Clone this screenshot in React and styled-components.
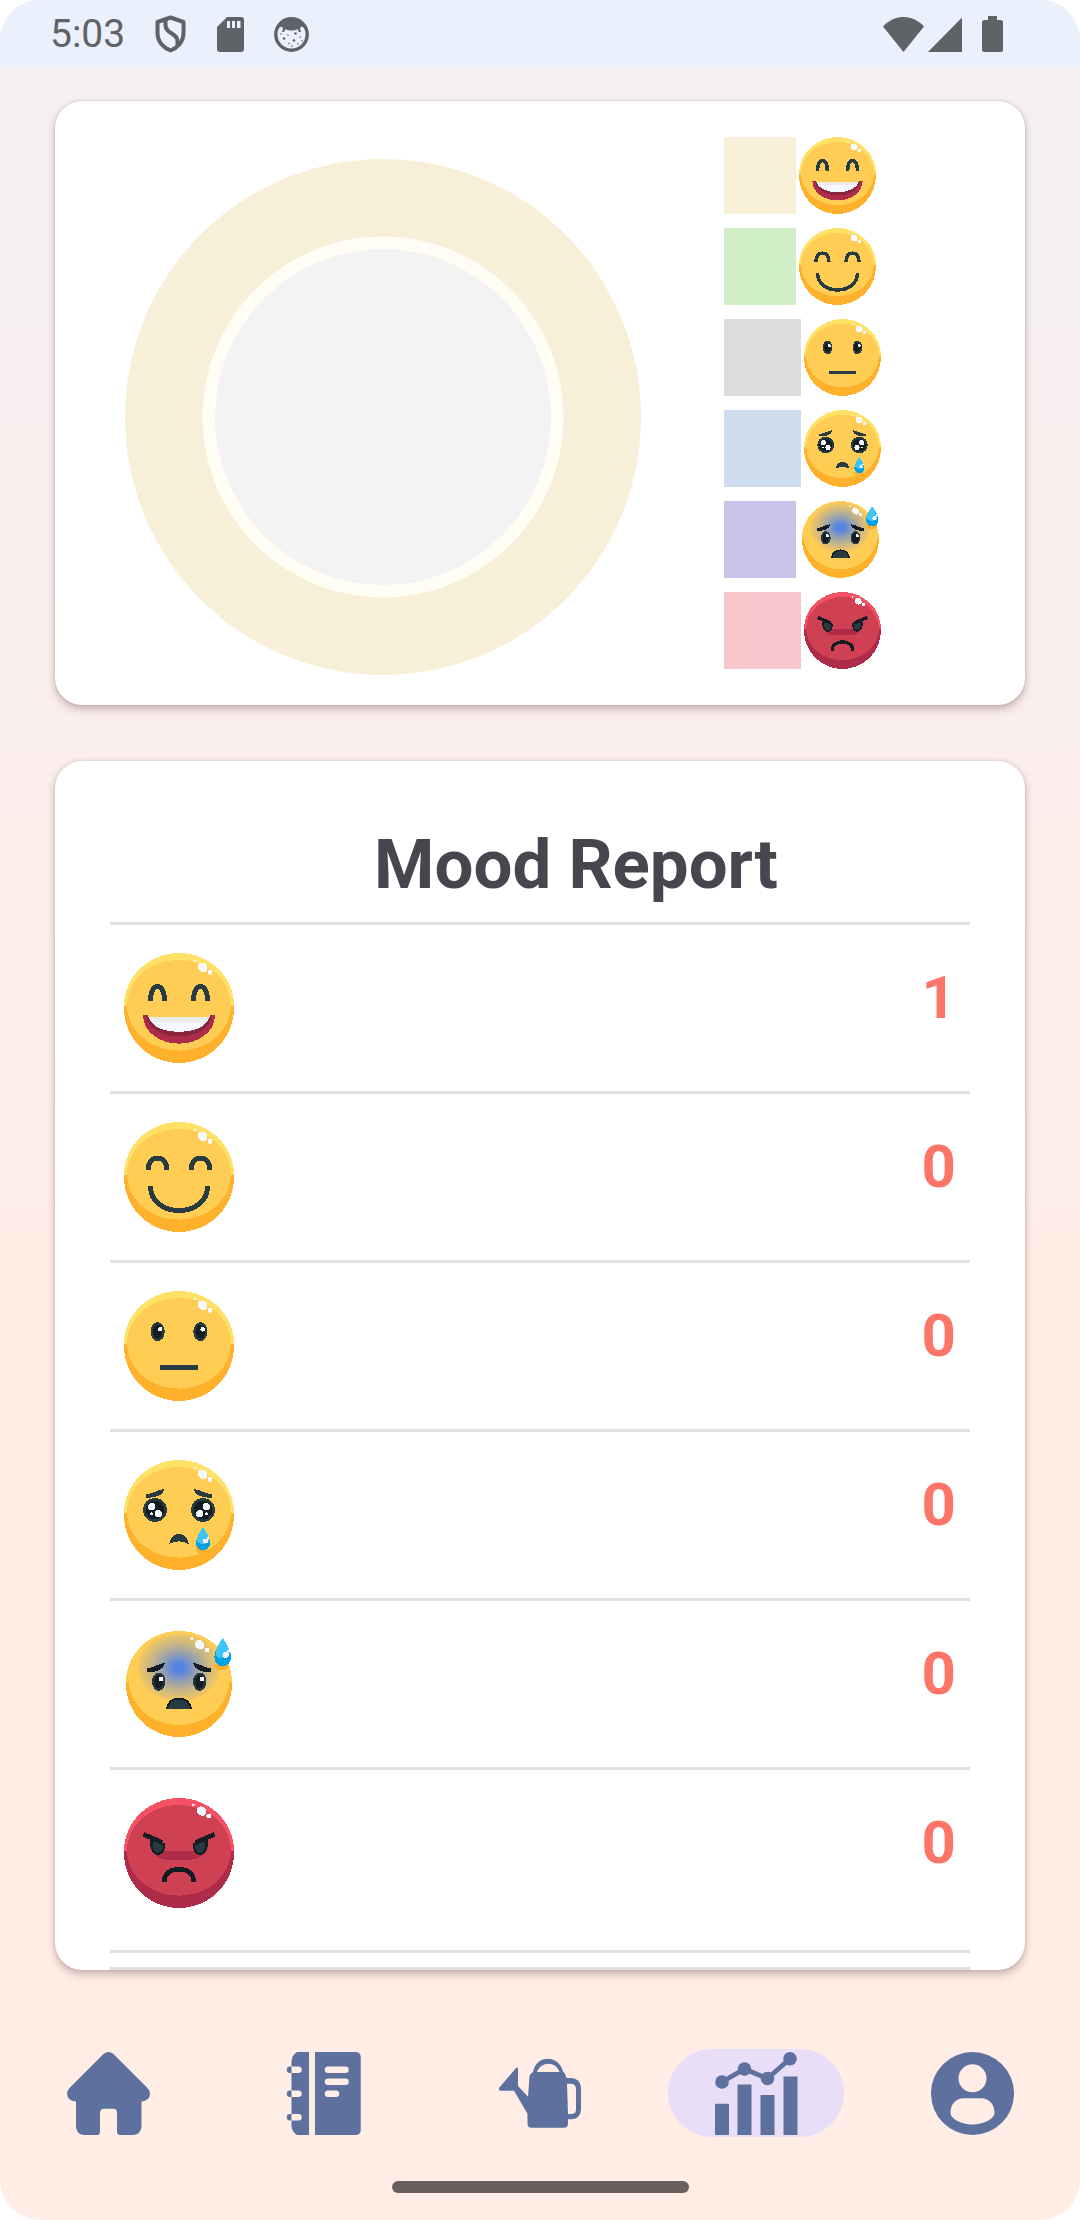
import React, { useId } from "react";
import styled, { createGlobalStyle } from "styled-components";

const GlobalStyle = createGlobalStyle`
  *, *::before, *::after { box-sizing: border-box; }
  body {
    margin: 0;
    background: #ffffff;
    font-family: Roboto, "Liberation Sans", sans-serif;
  }
  svg { display: block; flex: none; }
`;

const INK = "#273941";
const BLACK = "#131c20";
const SLATE = "#5d709e";

const Screen = styled.div`
  min-height: 100vh;
  display: flex;
  flex-direction: column;
  border-radius: 40px;
  overflow: hidden;
  background: linear-gradient(#f5f0f4 66px, #ffede6 1250px);
`;

const StatusBar = styled.header`
  display: flex;
  align-items: center;
  justify-content: space-between;
  height: 66px;
  padding: 2px 77px 0 50px;
  background: #eaf1fd;
  color: #5f6267;
`;

const StatusGroup = styled.div`
  display: flex;
  align-items: center;
  gap: ${(p) => p.$gap}px;
`;

const Clock = styled.time`
  font-size: 39px;
  line-height: 48px;
`;

const Content = styled.main`
  flex: 1;
  display: flex;
  flex-direction: column;
  gap: 56px;
  padding: 35px 55px 0;
`;

const Card = styled.section`
  background: #ffffff;
  border-radius: 27px;
  box-shadow: 0 4px 9px rgba(70, 40, 30, 0.3), 0 0 3px rgba(70, 40, 30, 0.16);
  overflow: hidden;
`;

const ChartCard = styled(Card)`
  display: flex;
  align-items: center;
  gap: 83px;
  padding: 30px 70px;
`;

const DonutFrame = styled.div`
  flex: 0 1 516px;
  padding-top: 28px;

  svg { width: 100%; height: auto; }
`;

const Legend = styled.ul`
  display: flex;
  flex-direction: column;
  gap: 14px;
  margin: 0;
  padding: 0;
  list-style: none;
`;

const LegendItem = styled.li`
  display: flex;
  gap: 3px;
`;

const Swatch = styled.span`
  width: ${(p) => (p.$narrow ? 72 : 77)}px;
  height: 77px;
  background: ${(p) => p.$color};
`;

const ReportCard = styled(Card)`
  padding: 0 55px;
`;

const ReportTable = styled.table`
  width: 100%;
  border-spacing: 0;
`;

const Title = styled.th`
  padding: 63px 0 16px 72px;
  border-bottom: 3px solid #e0e0e0;
  color: #49454f;
  font-size: 69px;
  line-height: 82px;
  font-weight: 700;
  text-align: center;
`;

const MoodCell = styled.th`
  padding: 28px 14px;
  border-bottom: 3px solid #e0e0e0;
  text-align: left;

  tr:last-child > & { padding-bottom: 42px; }
`;

const CountCell = styled.td`
  padding: 28px 14px;
  border-bottom: 3px solid #e0e0e0;
  vertical-align: top;
  text-align: right;
  color: #fd7469;
  font-size: 60px;
  line-height: 90px;
  font-weight: 700;
`;

const EndCell = styled.td`
  height: 17px;
  padding: 0;
  border-bottom: 3px solid #e0e0e0;
`;

const NavBar = styled.nav`
  display: grid;
  grid-template-columns: repeat(5, 1fr);
  justify-items: center;
  padding: 79px 0 44px;
`;

const NavButton = styled.button`
  display: flex;
  align-items: center;
  justify-content: center;
  width: 176px;
  height: 88px;
  padding: 0;
  border: 0;
  border-radius: 44px;
  background: ${(p) => (p.$active ? "#e8def8" : "transparent")};
  color: ${SLATE};
  cursor: pointer;
`;

const HomeHandle = styled.div`
  width: 297px;
  height: 12px;
  margin: 0 auto 27px;
  border-radius: 6px;
  background: #67605d;
`;

/* ---------- Faces ---------- */

const YELLOW = { top: "#ffe168", base: "#ffb12c", skin: "#ffcd54" };
const RED = { top: "#f65164", base: "#ae2b4a", skin: "#d04053" };

function Head({ tone }) {
  return (
    <>
      <circle cx="55" cy="55" r="55" fill={tone.base} />
      <path d="M0 53A55 53 0 0 1 110 53Z" fill={tone.top} />
      <ellipse cx="55" cy="52.3" rx="52" ry="45.3" fill={tone.skin} />
    </>
  );
}

function Shine({ x = 0, y = 0 }) {
  return (
    <g transform={`translate(${x} ${y})`} fill="#f5f9fd">
      <ellipse cx="78.7" cy="14.3" rx="5.2" ry="4.3" transform="rotate(40 78.7 14.3)" />
      <circle cx="86" cy="19.3" r="2.4" />
      <circle cx="70.7" cy="8" r="1.3" />
    </g>
  );
}

function Drop({ x, y, scale = 1 }) {
  return (
    <g transform={`translate(${x} ${y}) scale(${scale})`}>
      <path d="M0 0C3 5 7 10 7 16A7 7.5 0 0 1-7 16C-7 10-3 5 0 0Z" fill="#00a1e2" />
      <path d="M0 0C3 5 6.6 9 6 14C5 18-5 18-6 14C-6.6 9-3 5 0 0Z" fill="#3dc4f8" />
      <circle cx="2.6" cy="14" r="2.5" fill="#f5f9fd" />
      <circle cx="5" cy="10.8" r="1.2" fill="#f5f9fd" />
    </g>
  );
}

const Mirrored = ({ children }) => (
  <>
    {children}
    <g transform="translate(110 0) scale(-1 1)">{children}</g>
  </>
);

function Grin() {
  return (
    <>
      <Head tone={YELLOW} />
      <Shine />
      <Mirrored>
        <path d="M26.5 48C26.5 38 30 33.5 33.5 33.5S40.5 38 40.5 48" fill="none" stroke={INK} strokeWidth="5" />
      </Mirrored>
      <path d="M19 62.3H91C91 79 74 90.7 55 90.7S19 79 19 62.3Z" fill="#ae2b4a" />
      <path d="M22 62.3H88C86 76 72 83.3 55 83.3S24 76 22 62.3Z" fill="#8a263c" />
      <path d="M24 62.3H86C83 74 71 78.7 55 78.7S27 74 24 62.3Z" fill="#f5f9fd" />
      <path d="M24 62.3H86L83 68.5H27Z" fill="#ececec" />
      <path d="M25 62H85V64H25Z" fill="#ffcd54" />
    </>
  );
}

function Smile() {
  return (
    <>
      <Head tone={YELLOW} />
      <Shine />
      <g fill="none" stroke={INK} strokeWidth="5">
        <Mirrored>
          <path d="M24.3 48C24.3 40 28 36 33.5 36S42.7 40 42.7 48" />
        </Mirrored>
        <path d="M26.5 64C26.5 80 40 88.5 55 88.5S83.5 80 83.5 64" />
      </g>
    </>
  );
}

function Neutral() {
  return (
    <>
      <Head tone={YELLOW} />
      <Shine />
      {[33.7, 76.3].map((x) => (
        <g key={x}>
          <ellipse cx={x} cy="40.7" rx="7" ry="9.5" fill={INK} />
          <ellipse cx={x} cy="40.7" rx="4.6" ry="7" fill={BLACK} />
          <circle cx={x + 2.4} cy="38.3" r="2.3" fill="#f5f9fd" />
        </g>
      ))}
      <rect x="36" y="74" width="38" height="5" fill={INK} />
    </>
  );
}

function Crying() {
  return (
    <>
      <Head tone={YELLOW} />
      <Shine />
      <Mirrored>
        <path d="M22 34C31 34 33 29 40.7 29C39 36 31 38 22 37.7Z" fill={INK} />
        <circle cx="31" cy="50" r="12" fill={INK} />
        <circle cx="31" cy="50" r="9.2" fill={BLACK} />
        <circle cx="27.7" cy="46.7" r="3.7" fill="#f5f9fd" />
        <circle cx="34.3" cy="53.7" r="3.7" fill="#f5f9fd" />
        <circle cx="27.5" cy="53.7" r="1.3" fill="#f5f9fd" />
      </Mirrored>
      <path d="M45.3 84C46.5 77 50 74 55 74S63.5 77 64.7 84C59 80.5 51 80.5 45.3 84Z" fill={INK} />
      <circle cx="77" cy="89" r="5" fill="#ffb12c" />
      <Drop x={79} y={67} />
    </>
  );
}

function Worried() {
  const glow = useId();
  return (
    <>
      <radialGradient id={glow}>
        <stop offset="0" stopColor="#5082e6" />
        <stop offset="0.15" stopColor="#5082e6" stopOpacity="0.95" />
        <stop offset="1" stopColor="#8f9fc0" stopOpacity="0.12" />
      </radialGradient>
      <circle cx="55" cy="55" r="53" fill="#ffb12c" />
      <path d="M2 53A53 51 0 0 1 108 53Z" fill="#ffcd54" />
      <ellipse cx="55" cy="50" rx="50.5" ry="46" fill="#ffcd54" />
      <ellipse cx="55" cy="38.5" rx="41" ry="34" fill={`url(#${glow})`} />
      <Shine x={-3} y={1.5} />
      <Mirrored>
        <path d="M23 39C32 39 33 34 41 34C40 41 31 43.5 23 43Z" fill={BLACK} />
      </Mirrored>
      {[34.7, 75.7].map((x) => (
        <g key={x}>
          <ellipse cx={x} cy="52.7" rx="6.8" ry="9.2" fill={INK} />
          <ellipse cx={x} cy="52.7" rx="4.5" ry="7" fill={BLACK} />
          <circle cx={x + 2.2} cy="50" r="2.3" fill="#f5f9fd" />
        </g>
      ))}
      <path d="M42 80C43 72 48 68.7 55 68.7S67 72 68 80Z" fill={BLACK} />
      <path d="M44 80C45 73.5 49 70.5 55 70.5S65 73.5 66 80Z" fill={INK} />
      <ellipse cx="97.3" cy="37" rx="7.5" ry="4" fill="#ffb12c" />
      <Drop x={98.7} y={9} scale={1.2} />
    </>
  );
}

function Angry() {
  return (
    <>
      <Head tone={RED} />
      <Shine x={-1.3} y={-1.2} />
      <path d="M31 52.7H79V56C77 60 72 61.7 66 61.7H44C38 61.7 33 60 31 56Z" fill="#ae2b4a" />
      <Mirrored>
        <path d="M26 42L40.7 45C42 53 38.5 57 33.7 57S24.5 50 26.5 42Z" fill={BLACK} />
        <path d="M28.5 43.5L39 46C39.5 51.5 37 55 33.7 55S28 50 28.5 43.5Z" fill={INK} />
        <path d="M19.5 36.3L38.5 44.5" fill="none" stroke={BLACK} strokeWidth="4.6" />
      </Mirrored>
      <path d="M40.3 84C40.3 75 47 71.3 55 71.3S69.7 75 69.7 84" fill="none" stroke={BLACK} strokeWidth="4.8" />
    </>
  );
}

const moods = [
  { name: "Very happy", Face: Grin, color: "#f8efd8", count: 1, narrow: true },
  { name: "Happy", Face: Smile, color: "#d0efc6", count: 0, narrow: true },
  { name: "Neutral", Face: Neutral, color: "#dcdcdc", count: 0 },
  { name: "Sad", Face: Crying, color: "#cfdced", count: 0 },
  { name: "Worried", Face: Worried, color: "#c9c3e9", count: 0, narrow: true, box: "-2 2 110 106" },
  { name: "Angry", Face: Angry, color: "#f5c7ca", count: 0 },
];

function MoodFace({ mood, size, width = size, viewBox = "0 0 110 110" }) {
  const { Face, name } = mood;
  return (
    <svg width={width} height={size} viewBox={viewBox} role="img" aria-label={name} shapeRendering="crispEdges">
      <Face />
    </svg>
  );
}

/* ---------- Status icons ---------- */

const ShieldIcon = () => (
  <svg width="32" height="38" viewBox="0 0 32 38" fill="none" stroke="currentColor" strokeWidth="4" strokeLinejoin="round">
    <path d="M15.5 2.5L28.5 7V18C28.5 27 22 33 15.5 35.5C9 33 2.5 27 2.5 18V7Z" />
    <path d="M10.5 5V10C10.5 19 22.5 18 22.5 26V30" />
  </svg>
);

const SdCardIcon = () => (
  <svg width="27" height="35" viewBox="0 0 27 35">
    <path fill="currentColor" fillRule="evenodd" d="M10 0H24Q27 0 27 3V32Q27 35 24 35H3Q0 35 0 32V10ZM10 4V11H13V4ZM15 4V11H18V4ZM20 4V11H23.5V4Z" />
  </svg>
);

const FaceBadgeIcon = () => (
  <svg width="35" height="35" viewBox="0 0 35 35">
    <circle cx="17.5" cy="17.5" r="15.7" fill="none" stroke="currentColor" strokeWidth="3.4" />
    <path fill="currentColor" d="M4 11C7 4 12 2 17.5 2S28 4 31 11L27 9.5L26 12L27 15H25L23.5 12C20 14 15 14 11.5 12L10 15H8L9 12L8 9.5Z" />
    <g fill="currentColor">
      <circle cx="10" cy="21.5" r="1.3" /><circle cx="21.5" cy="16.5" r="1.3" />
      <circle cx="20" cy="23.5" r="1.3" /><circle cx="14" cy="18" r=".8" />
      <circle cx="26" cy="20" r=".8" /><circle cx="15" cy="26.5" r=".8" />
      <circle cx="24" cy="27" r=".8" /><circle cx="7" cy="17" r=".8" />
      <circle cx="28" cy="24" r=".8" /><circle cx="18" cy="29" r=".8" />
    </g>
  </svg>
);

const WifiIcon = () => (
  <svg width="41" height="35" viewBox="0 0 41 35">
    <path fill="currentColor" d="M0 9.5C12-3.2 29-3.2 41 9.5L20.5 35Z" />
  </svg>
);

const SignalIcon = () => (
  <svg width="34" height="35" viewBox="0 0 34 35"><path fill="currentColor" d="M34 0.5V35H0Z" /></svg>
);

const BatteryIcon = () => (
  <svg width="21" height="36" viewBox="0 0 21 36">
    <path fill="currentColor" d="M6 0H15V4H18.5Q21 4 21 6.5V33.5Q21 36 18.5 36H2.5Q0 36 0 33.5V6.5Q0 4 2.5 4H6Z" />
  </svg>
);

/* ---------- Navigation icons ---------- */

const NavIcon = ({ children }) => (
  <svg width="83" height="83" viewBox="0 0 83 83" fill="currentColor" aria-hidden="true">{children}</svg>
);

const HomeIcon = () => (
  <NavIcon>
    <path d="M36.5 2Q41.5-2 46.5 2L80 35.5Q83 38.5 83 42Q82.5 49 74.5 49.5V75Q73.5 82 66.5 83H53Q50 83 50 79.5V61Q50 56.7 46.5 56.7H36.5Q33 57 33 61V79.5Q33 83 30 83H17Q9.5 82 9 75V49.5Q.5 49 0 42Q0 38.5 3 35.5Z" />
  </NavIcon>
);

const NotebookIcon = () => (
  <NavIcon>
    <path d="M32 0H73Q77.7.5 77.7 5V78Q77.7 82.5 73 83H32ZM45 14.5A3.2 3.2 0 0 0 45 21H62.5A3.2 3.2 0 0 0 62.5 14.5ZM45 26.5A3.2 3.2 0 0 0 45 33H62.5A3.2 3.2 0 0 0 62.5 26.5ZM45 38.5A3.2 3.2 0 0 0 45 45H53A3.2 3.2 0 0 0 53 38.5Z" fillRule="evenodd" />
    <path d="M26 0V83H14Q9 80 8.5 74V68.5H15.5A3.2 3.2 0 0 0 15.5 62H8.5V45H15.5A3.2 3.2 0 0 0 15.5 38.5H8.5V21H15.5A3.2 3.2 0 0 0 15.5 14.5H8.5V9Q9 3 14 0Z" />
    <path d="M8.5 14.5V21H7A3.2 3.2 0 0 1 7 14.5ZM8.5 38.5V45H7A3.2 3.2 0 0 1 7 38.5ZM8.5 62V68.5H7A3.2 3.2 0 0 1 7 62Z" />
  </NavIcon>
);

const WateringCanIcon = () => (
  <NavIcon>
    <path fillRule="evenodd" d="M17.5 15.5Q19 15 19 17.5V34L29 44.7L30.5 24Q31 22 34 20C37 2.5 60 2.5 64 19.5Q67 22 67.5 26H73Q81 27 82 35V58Q81 66.5 73 67.3H69V72Q69 75.7 65 75.7H32.5Q28.5 75.7 28.5 71.5V61.7L15 38.7H2Q-1 38.5 0 36ZM38 20H60.5C57 9 42 9 38 20ZM68 31.7L69 62H73Q77 61.5 77 57.5V36.5Q76.5 32 72.5 31.7Z" />
  </NavIcon>
);

const StatsIcon = () => (
  <NavIcon>
    <path d="M0 51.7H14V83H0ZM22.5 32.5H36.5V83H22.5ZM45.5 43H59.5V83H45.5ZM68.5 24.5H82.5V83H68.5Z" />
    <path d="M7 30L29.5 17L52.5 26.5L75 6.7" fill="none" stroke="currentColor" strokeWidth="4.8" />
    <circle cx="7" cy="30" r="6.8" /><circle cx="29.5" cy="17" r="6.8" />
    <circle cx="52.5" cy="26.5" r="6.8" /><circle cx="75" cy="6.8" r="6.8" />
  </NavIcon>
);

const ProfileIcon = () => (
  <NavIcon>
    <path fillRule="evenodd" d="M41.5 0A41.5 41.5 0 1 1 41.5 83A41.5 41.5 0 1 1 41.5 0ZM41.5 12.3A14 14 0 1 0 41.5 40.3A14 14 0 1 0 41.5 12.3ZM33 46.3C24 46.5 19.5 53 19.5 61C19.5 67 31 72.5 41.5 72.5S63.5 67 63.5 61C63.5 53 59 46.5 50 46.3Z" />
  </NavIcon>
);

const tabs = [
  { label: "Home", Icon: HomeIcon },
  { label: "Journal", Icon: NotebookIcon },
  { label: "Garden", Icon: WateringCanIcon },
  { label: "Statistics", Icon: StatsIcon, active: true },
  { label: "Profile", Icon: ProfileIcon },
];

function DonutChart() {
  return (
    <svg viewBox="0 0 516 516" role="img" aria-label="Mood distribution">
      <circle cx="258" cy="258" r="258" fill="#f8efd8" />
      <circle cx="258" cy="258" r="180.5" fill="#fffdf4" />
      <circle cx="258" cy="258" r="168" fill="#f3f3f3" />
    </svg>
  );
}

export default function App() {
  return (
    <>
      <GlobalStyle />
      <Screen>
        <StatusBar>
          <StatusGroup $gap={30}>
            <Clock>5:03</Clock>
            <ShieldIcon />
            <SdCardIcon />
            <FaceBadgeIcon />
          </StatusGroup>
          <StatusGroup $gap={20}>
            <StatusGroup $gap={4}>
              <WifiIcon />
              <SignalIcon />
            </StatusGroup>
            <BatteryIcon />
          </StatusGroup>
        </StatusBar>

        <Content>
          <ChartCard>
            <DonutFrame>
              <DonutChart />
            </DonutFrame>
            <Legend>
              {moods.map((mood) => (
                <LegendItem key={mood.name}>
                  <Swatch $color={mood.color} $narrow={mood.narrow} />
                  <MoodFace mood={mood} size={77} width={mood.box ? 80 : 77} viewBox={mood.box} />
                </LegendItem>
              ))}
            </Legend>
          </ChartCard>

          <ReportCard>
            <ReportTable>
              <thead>
                <tr>
                  <Title colSpan={2}>Mood Report</Title>
                </tr>
              </thead>
              <tbody>
                {moods.map((mood) => (
                  <tr key={mood.name}>
                    <MoodCell scope="row">
                      <MoodFace mood={mood} size={110} />
                    </MoodCell>
                    <CountCell>{mood.count}</CountCell>
                  </tr>
                ))}
              </tbody>
              <tfoot>
                <tr>
                  <EndCell colSpan={2} />
                </tr>
              </tfoot>
            </ReportTable>
          </ReportCard>
        </Content>

        <NavBar aria-label="Main">
          {tabs.map(({ label, Icon, active }) => (
            <NavButton key={label} type="button" aria-label={label} aria-current={active ? "page" : undefined} $active={active}>
              <Icon />
            </NavButton>
          ))}
        </NavBar>
        <HomeHandle />
      </Screen>
    </>
  );
}
